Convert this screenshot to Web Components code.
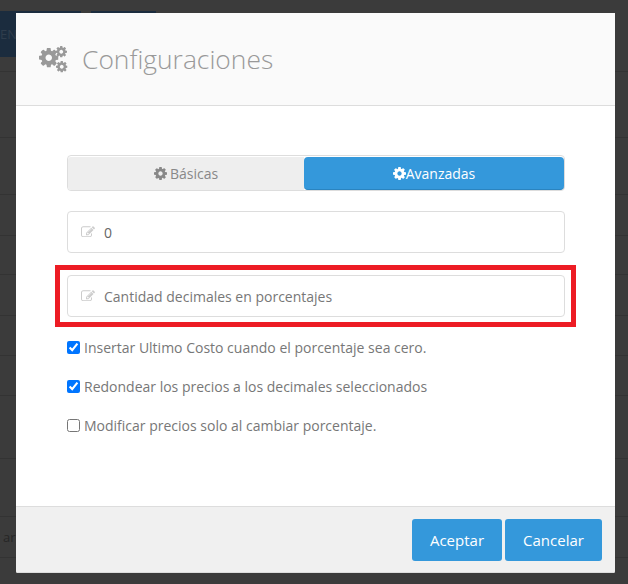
<!DOCTYPE html>
<html lang="es"><head><meta charset="utf-8"><title>Configuraciones</title>
<style>
html,body{margin:0;padding:0;height:100%}
body{width:628px;height:584px;overflow:hidden;position:relative;background:#3b3b3b;font-family:"Open Sans",sans-serif}
</style></head><body>
<backdrop-page></backdrop-page>
<settings-modal heading="Configuraciones">
  <segment-tabs>
    <tab-button icon="cog" style="flex:0 0 236px">Básicas</tab-button>
    <tab-button icon="cog" active style="flex:1">Avanzadas</tab-button>
  </segment-tabs>
  <text-field value="0"></text-field>
  <text-field placeholder="Cantidad decimales en porcentajes" highlighted></text-field>
  <check-row checked>Insertar Ultimo Costo cuando el porcentaje sea cero.</check-row>
  <check-row checked>Redondear los precios a los decimales seleccionados</check-row>
  <check-row>Modificar precios solo al cambiar porcentaje.</check-row>
  <action-button slot="footer" style="width:90px">Aceptar</action-button>
  <action-button slot="footer" style="width:97px">Cancelar</action-button>
</settings-modal>
<script>
const COG="M1152 896q0-106-75-181t-181-75-181 75-75 181 75 181 181 75 181-75 75-181zm512-109v222q0 12-8 23t-20 13l-185 28q-19 54-39 91 35 50 107 138 10 12 10 25t-9 23q-27 37-99 108t-94 71q-12 0-26-9l-138-108q-44 23-91 38-16 136-29 186-7 28-36 28h-222q-14 0-24.5-8.5t-11.5-21.5l-28-184q-49-16-90-37l-141 107q-10 9-25 9-14 0-25-11-126-114-165-168-7-10-7-23 0-12 8-23 15-21 51-66.5t54-70.5q-27-50-41-99l-183-27q-13-2-21-12.5t-8-23.5v-222q0-12 8-23t19-13l186-28q14-46 39-92-40-57-107-138-10-12-10-24 0-10 9-23 26-36 98.5-107.5t94.5-71.5q13 0 26 10l138 107q44-23 91-38 16-136 29-186 7-28 36-28h222q14 0 24.5 8.5t11.5 21.5l28 184q49 16 90 37l142-107q9-9 24-9 13 0 25 10 129 119 165 170 7 8 7 22 0 12-8 23-15 21-51 66.5t-54 70.5q26 50 41 98l183 28q13 2 21 12.5t8 23.5z";
const EDIT="M888 1184l116-116-152-152-116 116v56h96v96h56zm440-720q-16-16-33 1l-350 350q-17 17-1 33t33-1l350-350q17-17 1-33zm80 594v190q0 119-84.5 203.5t-203.5 84.5h-832q-119 0-203.5-84.5t-84.5-203.5v-832q0-119 84.5-203.5t203.5-84.5h832q63 0 117 25 15 7 18 23 3 17-9 29l-49 49q-14 14-32 8-23-6-45-6h-832q-66 0-113 47t-47 113v832q0 66 47 113t113 47h832q66 0 113-47t47-113v-126q0-13 9-22l64-64q15-15 35-7t20 29zm-96-738l288 288-672 672h-288v-288zm444 132l-92 92-288-288 92-92q28-28 68-28t68 28l152 152q28 28 28 68t-28 68z";
const define=(name,css,html)=>customElements.define(name,class extends HTMLElement{
  connectedCallback(){ if(this.shadowRoot) return;
    const r=this.attachShadow({mode:"open"});
    r.innerHTML=`<style>${css}</style>`+(typeof html==="function"?html(this):html);
  }});

define("backdrop-page",`
  :host{display:block;position:absolute;inset:0;overflow:hidden;font:13px "Open Sans",sans-serif}
  .top{height:11px}
  .tabs{display:flex;gap:10px;height:46px}
  .tabs div{background:#1b2c3e;color:#2f3d4c;line-height:46px}
  .t1{width:81px}
  .t2{width:65px}
  .row{border-bottom:1px solid #333}
  .bar{line-height:40px;color:#262626;padding-left:3px}
`,`<div class="top"></div>
  <div class="tabs"><div class="t1">EN</div><div class="t2"></div></div>
  ${[15,66,57,41,39,41,40,40,63,58].map(h=>`<div class="row" style="height:${h-1}px"></div>`).join("")}
  <div class="row bar" style="height:40px">ar</div>`);

const gear=(x,y,s)=>`<svg x="${x}" y="${y}" width="${s}" height="${s}" viewBox="128 128 1536 1536"><path d="${COG}"/></svg>`;
define("settings-modal",`
  :host{display:block;position:absolute;left:16px;top:13px;width:599px;height:560px;background:#fff;
    border-radius:2px;display:flex;flex-direction:column;color:#777}
  header{height:93px;box-sizing:border-box;background:#fafafa;border-bottom:1px solid #ddd;display:flex;align-items:center;gap:14px;padding:0 0 0 22px;flex:none}
  .cogs{width:30px;height:28px;fill:#999;flex:none}
  h1{margin:0;font:300 26.4px/34px "Open Sans",sans-serif;color:#999}
  main{flex:1;padding:49px 50px 0 51px;display:flex;flex-direction:column;min-height:0}
  footer{height:67px;box-sizing:border-box;background:#f0f0f0;border-top:1px solid #ddd;border-bottom:1px solid #ddd;display:flex;justify-content:flex-end;gap:3px;padding:12px 13px 0 0;flex:none;border-radius:0 0 2px 2px}
`,el=>`<header>
   <svg class="cogs" viewBox="0 0 30 28" aria-hidden="true">${gear(1,3,19.5)}${gear(17.5,1,11.5)}${gear(18,16,11.5)}</svg>
   <h1>${el.getAttribute("heading")}</h1></header>
   <main><slot></slot></main><footer><slot name="footer"></slot></footer>`);

define("segment-tabs",`
  :host{display:flex;box-sizing:border-box;height:36px;border:1px solid #ddd;border-radius:4px;padding:1px 0 0 0;background:#fff;margin-bottom:20px}
`,`<slot></slot>`);

define("tab-button",`
  :host{display:flex;align-items:center;justify-content:center;height:33px;font:14px "Open Sans",sans-serif;
     background:#eee;color:#888;border-radius:3px 0 0 3px;gap:3px}
  :host([active]){background:#3498db;color:#fff;font-weight:500;border-radius:4px;gap:0;border-bottom:1px solid #2a84c0;height:32px}
  svg{width:13px;height:13px;fill:currentColor;flex:none}
`,`<svg viewBox="128 128 1536 1536" aria-hidden="true"><path d="${COG}"/></svg><slot></slot>`);

define("text-field",`
  :host{display:block;position:relative;box-sizing:border-box;height:42px;border:1px solid #ddd;border-radius:4px;background:#fff;margin-bottom:22px;
     font:14px "Open Sans",sans-serif}
  .in{display:flex;align-items:center;height:100%;padding-left:13px;gap:9px;color:#666}
  .in.ph{color:#777}
  svg{width:14px;height:11.5px;fill:#ccc;flex:none;margin-top:-1px}
  .red{position:absolute;left:-13px;top:-11px;right:-12px;bottom:-11px;border:5px solid #ed1c24;pointer-events:none}
  :host([highlighted]){margin-bottom:13px}
`,el=>`<div class="in ${el.hasAttribute("placeholder")?"ph":""}"><svg viewBox="0 128 1792 1408" aria-hidden="true"><path d="${EDIT}"/></svg><span>${el.getAttribute("value")||el.getAttribute("placeholder")}</span></div>${el.hasAttribute("highlighted")?'<div class="red"></div>':""}`);

define("check-row",`
  :host{display:flex;align-items:center;height:39px;font:14px/39px "Open Sans",sans-serif;color:#777;margin-top:-2px;margin-bottom:2px}
  input{width:13px;height:13px;margin:0 4px 0 0;accent-color:#0075ff;flex:none}
`,el=>`<input type="checkbox" ${el.hasAttribute("checked")?"checked":""}><slot></slot>`);

define("action-button",`
  :host{display:flex;align-items:center;justify-content:center;height:42px;background:#3498db;color:#fff;border-radius:3px;font:15px "Open Sans",sans-serif;box-sizing:border-box}
`,`<slot></slot>`);
</script>
</body></html>
